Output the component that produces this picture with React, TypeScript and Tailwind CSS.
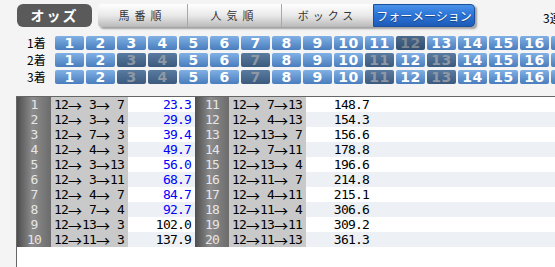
import React from "react";

// ─── Data ─────────────────────────────────────────────────────────────────────
const left = [
  { no: 1, c: [12, 3, 7], odds: "23.3" },
  { no: 2, c: [12, 3, 4], odds: "29.9" },
  { no: 3, c: [12, 7, 3], odds: "39.4" },
  { no: 4, c: [12, 4, 3], odds: "49.7" },
  { no: 5, c: [12, 3, 13], odds: "56.0" },
  { no: 6, c: [12, 3, 11], odds: "68.7" },
  { no: 7, c: [12, 4, 7], odds: "84.7" },
  { no: 8, c: [12, 7, 4], odds: "92.7" },
  { no: 9, c: [12, 13, 3], odds: "102.0" },
  { no: 10, c: [12, 11, 3], odds: "137.9" },
];

const right = [
  { no: 11, c: [12, 7, 13], odds: "148.7" },
  { no: 12, c: [12, 4, 13], odds: "154.3" },
  { no: 13, c: [12, 13, 7], odds: "156.6" },
  { no: 14, c: [12, 7, 11], odds: "178.8" },
  { no: 15, c: [12, 13, 4], odds: "196.6" },
  { no: 16, c: [12, 11, 7], odds: "214.8" },
  { no: 17, c: [12, 4, 11], odds: "215.1" },
  { no: 18, c: [12, 11, 4], odds: "306.6" },
  { no: 19, c: [12, 13, 11], odds: "309.2" },
  { no: 20, c: [12, 11, 13], odds: "361.3" },
];

const picks = [
  { label: "1着", off: [12] },
  { label: "2着", off: [3, 4, 7, 11, 13] },
  { label: "3着", off: [3, 4, 7, 11, 13] },
];

const horses = Array.from({ length: 18 }, (_, i) => i + 1);

const mono = "font-['DejaVu_Sans_Mono',monospace] text-[13px] tracking-[-0.8px]";

function Combo({ c }: { c: number[] }) {
  return (
    <div className="flex items-center text-black">
      {c.map((n, i) => (
        <React.Fragment key={i}>
          {i > 0 && (
            <span className="w-[14px] shrink-0 text-center font-['Noto_Sans_CJK_JP',sans-serif] text-[14px] leading-none">→</span>
          )}
          <span className={`w-[14px] shrink-0 text-right ${mono}`}>{n}</span>
        </React.Fragment>
      ))}
    </div>
  );
}

type Row = { no: number; c: number[]; odds: string };

function Cells({ r }: { r: Row }) {
  const cheap = parseFloat(r.odds) < 100;
  return (
    <>
      <div className={`w-[34px] shrink-0 flex items-center justify-center text-[#e6e6e6] bg-[linear-gradient(to_right,#4e4e4e,#8c8c8c_45%,#6c6c6c)] ${mono}`}>
        {r.no}
      </div>
      <div className="w-[77px] shrink-0 pl-[3px] flex items-center bg-[#c9c9c9]">
        <Combo c={r.c} />
      </div>
      <div className={`w-[67px] shrink-0 pr-[4px] flex items-center justify-end ${mono} ${cheap ? "text-[#0000ff]" : "text-black"}`}>
        {r.odds}
      </div>
    </>
  );
}

export default function App() {
  return (
    <div className="w-[555px] h-[267px] overflow-hidden bg-[#f4f4f4] flex flex-col font-['Noto_Sans_CJK_JP',sans-serif]">
      {/* ── Header ── */}
      <div className="flex items-start pt-[4px] pl-[17px] shrink-0 w-[620px]">
        <div className="w-[75px] h-[23px] shrink-0 rounded-[6px] bg-[#5a5a5a] flex items-center justify-center text-white font-bold text-[14px] tracking-[2px]">
          オッズ
        </div>
        <div className="ml-[6px] shrink-0 flex h-[23px] rounded-[4px] bg-linear-to-b from-[#ffffff] via-[#e9e9e9] to-[#b9b9b9] shadow-[2px_2px_2px_rgba(0,0,0,0.35)]">
          <div className="w-[90px] flex items-center justify-center text-[11px] tracking-[5px] text-[#333] border-r border-[#a8a8a8]">馬番順</div>
          <div className="w-[94px] flex items-center justify-center text-[11px] tracking-[5px] text-[#333] border-r border-[#a8a8a8]">人気順</div>
          <div className="w-[91px] flex items-center justify-center text-[11px] tracking-[4px] text-[#333]">ボックス</div>
          <div className="w-[102px] flex items-center justify-center text-[12px] text-white rounded-r-[4px] border border-[#1a4f9c] bg-linear-to-b from-[#4a92e8] via-[#2a72d6] to-[#1d5cb8] [text-shadow:0_1px_1px_rgba(0,0,0,0.4)]">
            フォーメーション
          </div>
        </div>
        <div className="ml-[68px] mt-[5px] shrink-0 text-[12px] text-black whitespace-nowrap">3連単</div>
      </div>

      {/* ── Horse picker ── */}
      <div className="mt-[9px] flex flex-col gap-[3px] shrink-0 w-[620px]">
        {picks.map((p, ri) => (
          <div key={p.label} className="flex items-center h-[14px] pl-[27px]">
            <div className="w-[28px] shrink-0 text-[12px] leading-none text-black whitespace-nowrap">{p.label}</div>
            <div className="flex gap-[2px] shrink-0">
              {horses.map((h) => {
                const off = p.off.includes(h);
                const sel = ri === 0 && off;
                return (
                  <div
                    key={h}
                    className={`w-[29px] h-[14px] shrink-0 rounded-[2px] flex items-center justify-center font-['DejaVu_Sans',sans-serif] font-bold text-[14px] tracking-[0.5px] leading-none ${
                      sel
                        ? "bg-linear-to-b from-[#4c6a8c] to-[#324f70] text-[#7e8794]"
                        : off
                        ? "bg-linear-to-b from-[#5a7ba1] to-[#3b5a7d] text-[#8e98a5]"
                        : "bg-linear-to-b from-[#80b0e4] to-[#4a7dbd] text-white"
                    }`}
                  >
                    {h}
                  </div>
                );
              })}
            </div>
          </div>
        ))}
      </div>

      {/* ── Odds table ── */}
      <div className="mt-[12px] ml-[16px] flex-1 w-[600px] shrink-0 bg-white border-l border-t border-[#666]">
        {left.map((r, i) => (
          <div key={r.no} className={`flex h-[15px] ${i % 2 ? "bg-[#edf0f4]" : "bg-white"}`}>
            <Cells r={r} />
            <Cells r={right[i]} />
            <div className="flex-1" />
          </div>
        ))}
      </div>
    </div>
  );
}
